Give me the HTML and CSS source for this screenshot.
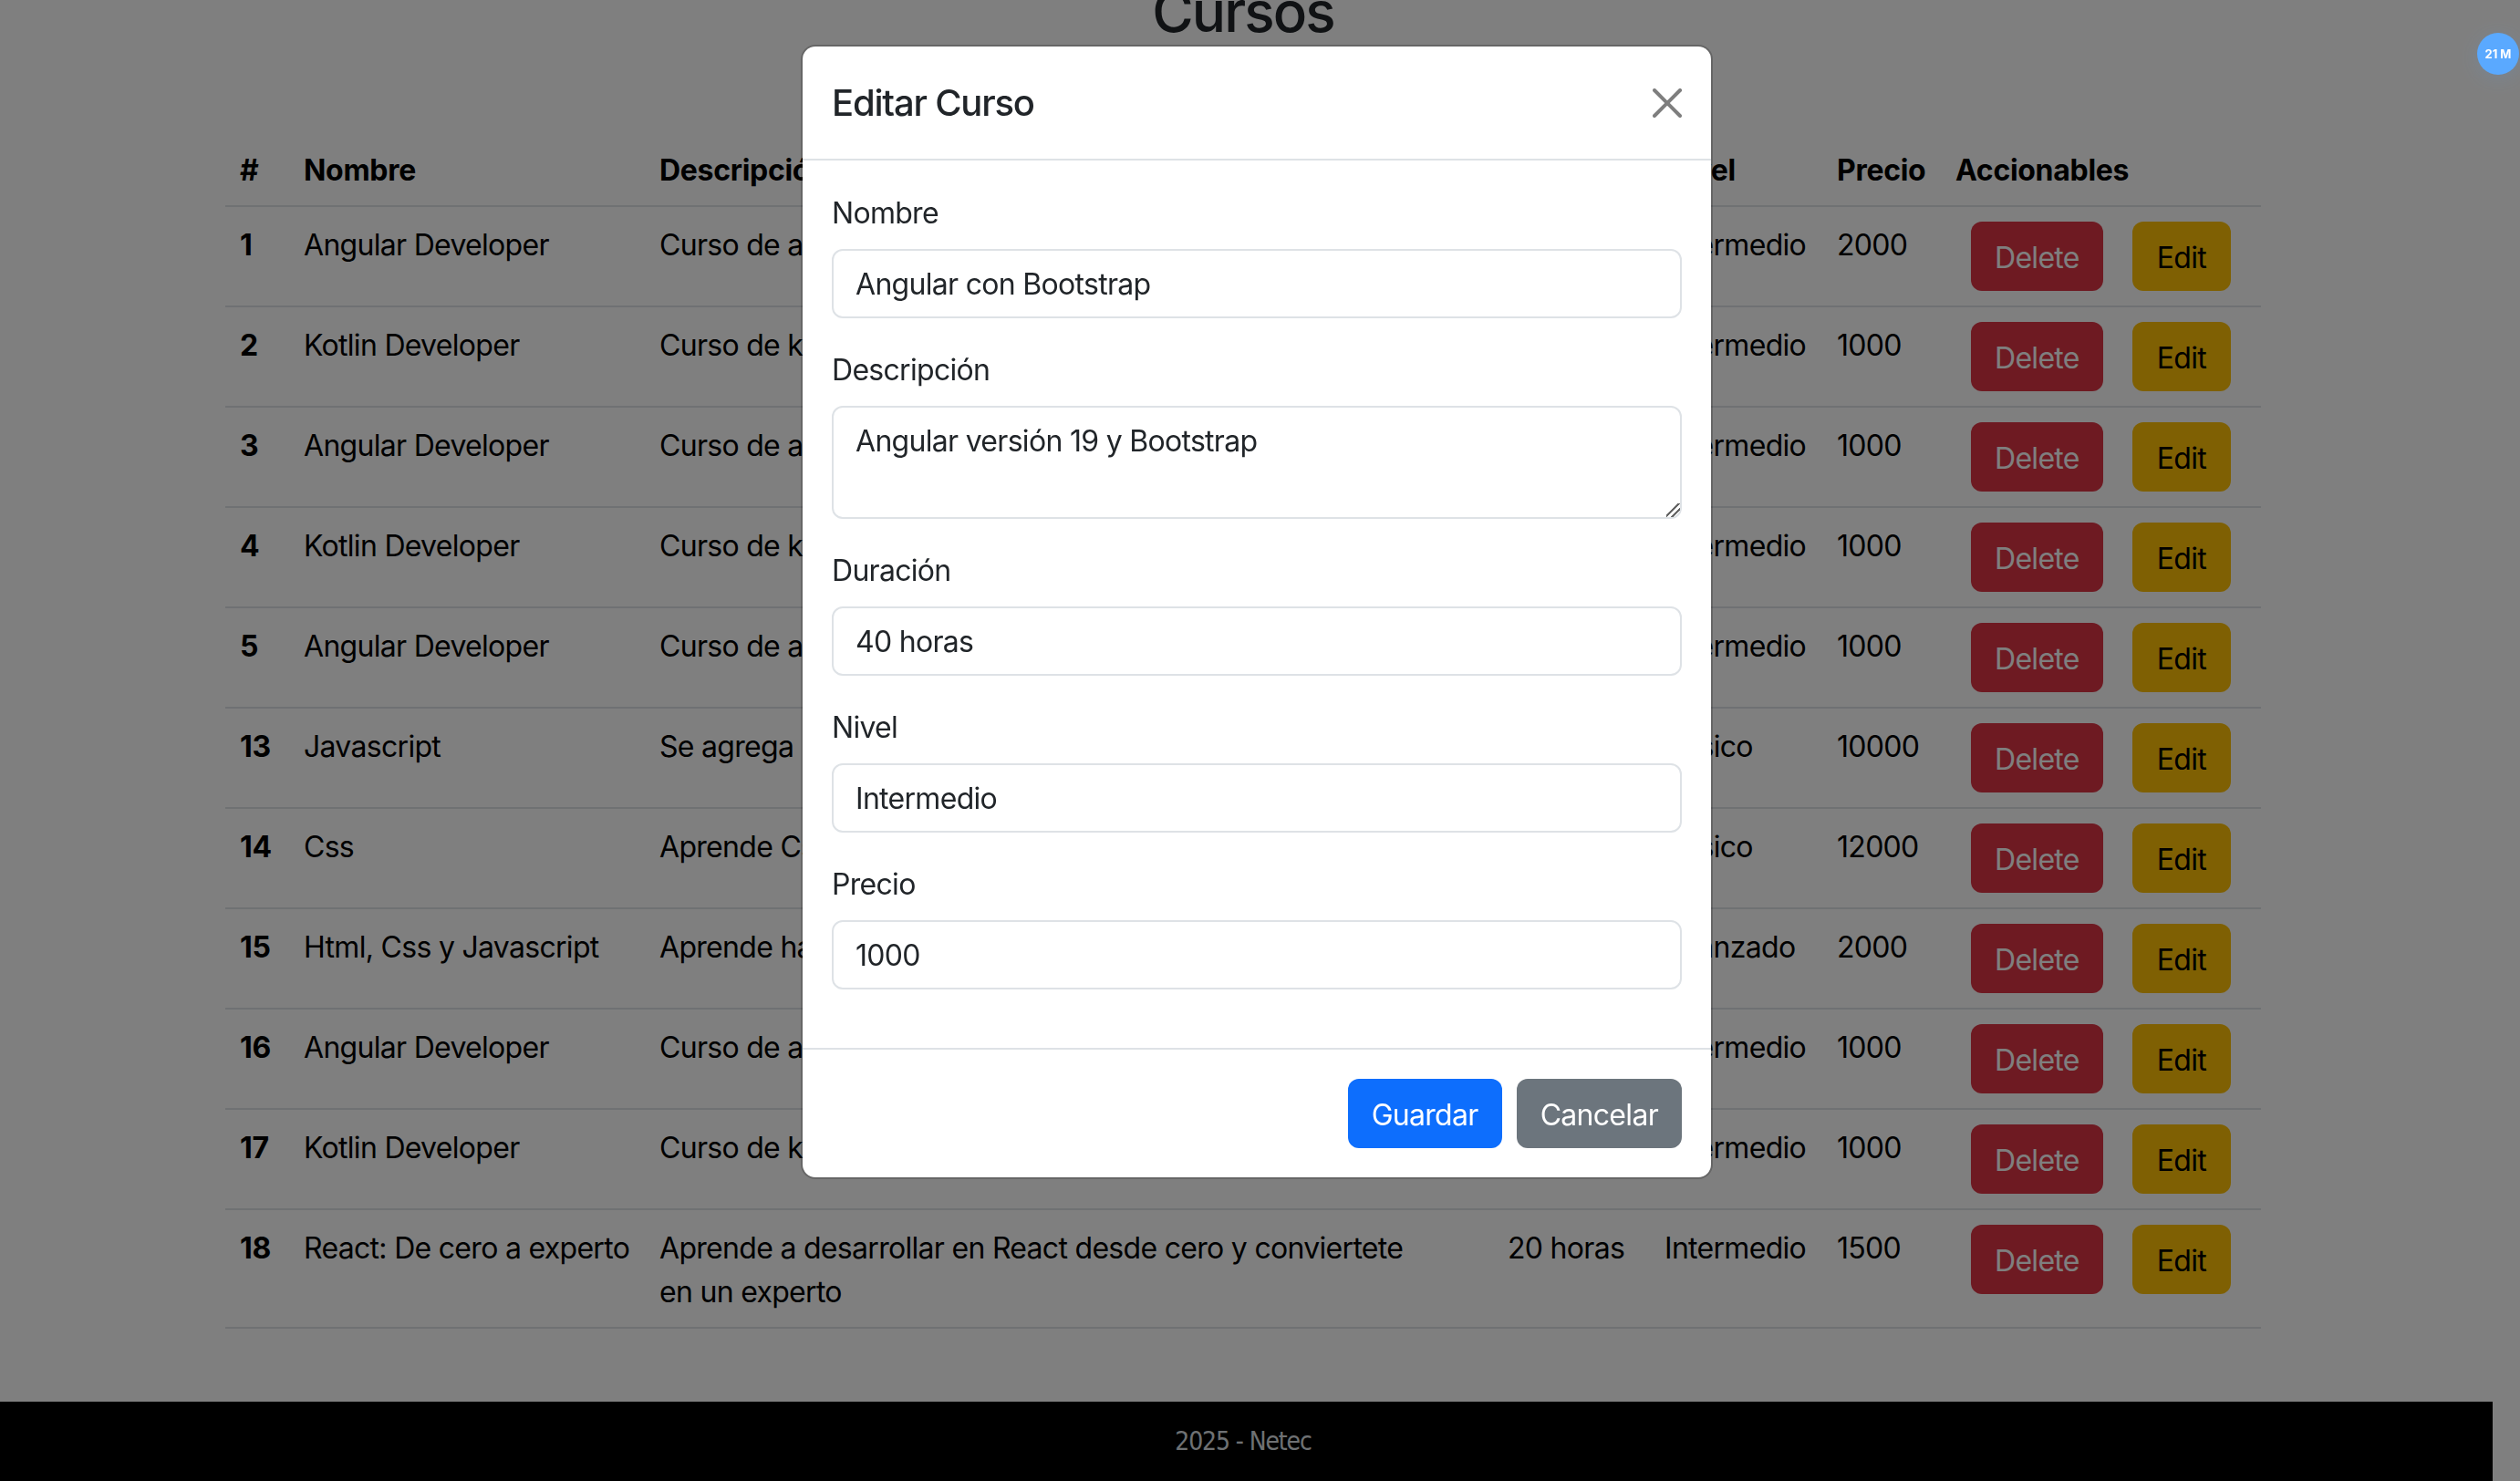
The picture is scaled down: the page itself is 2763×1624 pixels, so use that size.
FILE: index.html
```html
<!DOCTYPE html>
<html lang="es">
    <head>
        <meta charset="utf-8">
        <title>Cursos</title>
        <link rel="stylesheet" href="styles.css">
    </head>
    <body>
        <div class="page">
            <main class="container">
                <h1 class="page-title">Cursos</h1>
                <table class="courses">
                    <colgroup>
                        <col class="col-id">
                        <col class="col-name">
                        <col class="col-desc">
                        <col class="col-time">
                        <col class="col-level">
                        <col class="col-price">
                        <col class="col-actions">
                    </colgroup>
                    <thead>
                        <tr>
                            <th>#</th>
                            <th>Nombre</th>
                            <th>Descripción</th>
                            <th>Duración</th>
                            <th>Nivel</th>
                            <th>Precio</th>
                            <th>Accionables</th>
                        </tr>
                    </thead>
                    <tbody>
                        <tr>
                            <th>1</th>
                            <td>Angular Developer</td>
                            <td>Curso de angular</td>
                            <td>40 horas</td>
                            <td>Intermedio</td>
                            <td>2000</td>
                            <td class="actions"><button class="btn btn-danger">Delete</button><button class="btn btn-warning">Edit</button></td>
                        </tr>
                        <tr>
                            <th>2</th>
                            <td>Kotlin Developer</td>
                            <td>Curso de kotlin</td>
                            <td>40 horas</td>
                            <td>Intermedio</td>
                            <td>1000</td>
                            <td class="actions"><button class="btn btn-danger">Delete</button><button class="btn btn-warning">Edit</button></td>
                        </tr>
                        <tr>
                            <th>3</th>
                            <td>Angular Developer</td>
                            <td>Curso de angular</td>
                            <td>40 horas</td>
                            <td>Intermedio</td>
                            <td>1000</td>
                            <td class="actions"><button class="btn btn-danger">Delete</button><button class="btn btn-warning">Edit</button></td>
                        </tr>
                        <tr>
                            <th>4</th>
                            <td>Kotlin Developer</td>
                            <td>Curso de kotlin</td>
                            <td>40 horas</td>
                            <td>Intermedio</td>
                            <td>1000</td>
                            <td class="actions"><button class="btn btn-danger">Delete</button><button class="btn btn-warning">Edit</button></td>
                        </tr>
                        <tr>
                            <th>5</th>
                            <td>Angular Developer</td>
                            <td>Curso de angular</td>
                            <td>40 horas</td>
                            <td>Intermedio</td>
                            <td>1000</td>
                            <td class="actions"><button class="btn btn-danger">Delete</button><button class="btn btn-warning">Edit</button></td>
                        </tr>
                        <tr>
                            <th>13</th>
                            <td>Javascript</td>
                            <td>Se agrega</td>
                            <td>40 horas</td>
                            <td>Básico</td>
                            <td>10000</td>
                            <td class="actions"><button class="btn btn-danger">Delete</button><button class="btn btn-warning">Edit</button></td>
                        </tr>
                        <tr>
                            <th>14</th>
                            <td>Css</td>
                            <td>Aprende Css</td>
                            <td>40 horas</td>
                            <td>Básico</td>
                            <td>12000</td>
                            <td class="actions"><button class="btn btn-danger">Delete</button><button class="btn btn-warning">Edit</button></td>
                        </tr>
                        <tr>
                            <th>15</th>
                            <td>Html, Css y Javascript</td>
                            <td>Aprende hacer</td>
                            <td>40 horas</td>
                            <td>Avanzado</td>
                            <td>2000</td>
                            <td class="actions"><button class="btn btn-danger">Delete</button><button class="btn btn-warning">Edit</button></td>
                        </tr>
                        <tr>
                            <th>16</th>
                            <td>Angular Developer</td>
                            <td>Curso de angular</td>
                            <td>40 horas</td>
                            <td>Intermedio</td>
                            <td>1000</td>
                            <td class="actions"><button class="btn btn-danger">Delete</button><button class="btn btn-warning">Edit</button></td>
                        </tr>
                        <tr>
                            <th>17</th>
                            <td>Kotlin Developer</td>
                            <td>Curso de kotlin</td>
                            <td>40 horas</td>
                            <td>Intermedio</td>
                            <td>1000</td>
                            <td class="actions"><button class="btn btn-danger">Delete</button><button class="btn btn-warning">Edit</button></td>
                        </tr>
                        <tr>
                            <th>18</th>
                            <td>React: De cero a experto</td>
                            <td>Aprende a desarrollar en React desde cero y conviertete<br>en un experto</td>
                            <td>20 horas</td>
                            <td>Intermedio</td>
                            <td>1500</td>
                            <td class="actions"><button class="btn btn-danger">Delete</button><button class="btn btn-warning">Edit</button></td>
                        </tr>
                    </tbody>
                </table>
            </main>
            <footer class="site-footer">2025 - Netec</footer>
        </div>

        <div class="backdrop">
            <div class="modal">
                <div class="modal-header">
                    <h5 class="modal-title">Editar Curso</h5>
                    <button class="btn-close" aria-label="Cerrar">
                        <svg viewBox="0 0 16 16" width="32" height="32" fill="#000"><path d="M.293.293a1 1 0 0 1 1.414 0L8 6.586 14.293.293a1 1 0 1 1 1.414 1.414L9.414 8l6.293 6.293a1 1 0 0 1-1.414 1.414L8 9.414l-6.293 6.293a1 1 0 0 1-1.414-1.414L6.586 8 .293 1.707a1 1 0 0 1 0-1.414"/></svg>
                    </button>
                </div>
                <form class="modal-body">
                    <div class="field">
                        <label for="nombre">Nombre</label>
                        <input id="nombre" type="text" value="Angular con Bootstrap">
                    </div>
                    <div class="field">
                        <label for="descripcion">Descripción</label>
                        <textarea id="descripcion" rows="2">Angular versión 19 y Bootstrap</textarea>
                    </div>
                    <div class="field">
                        <label for="duracion">Duración</label>
                        <input id="duracion" type="text" value="40 horas">
                    </div>
                    <div class="field">
                        <label for="nivel">Nivel</label>
                        <input id="nivel" type="text" value="Intermedio">
                    </div>
                    <div class="field">
                        <label for="precio">Precio</label>
                        <input id="precio" type="text" value="1000">
                    </div>
                </form>
                <div class="modal-footer">
                    <button class="btn btn-primary">Guardar</button>
                    <button class="btn btn-secondary">Cancelar</button>
                </div>
            </div>
        </div>

        <div class="timer-badge">21 M</div>
    </body>
</html>
```

FILE: styles.css
```css
body {
    margin: 0;
    height: 100vh;
    overflow: hidden;
    background-color: #fff;
    color: #212529;
    font-family: Inter, "Liberation Sans", sans-serif;
    font-size: 32px;
    letter-spacing: -0.7px;
    line-height: 48px;
}

.page {
    width: 2733px;
}

/* the screenshot is scrolled down a bit, so the title is cut off at the top */
.container {
    width: 2232px;
    margin: -26px 0 0 247px;
    padding-bottom: 80px;
}

.page-title {
    margin: 0 0 94px;
    font-size: 62px;
    font-weight: 500;
    letter-spacing: -1.9px;
    line-height: 77px;
    text-align: center;
}

.courses {
    width: 100%;
    border-collapse: collapse;
    color: #000;
    table-layout: fixed;
}

.col-id { width: 70px; }
.col-name { width: 390px; }
.col-desc { width: 930px; }
.col-time { width: 172px; }
.col-level { width: 189px; }
.col-price { width: 130px; }
.col-actions { width: 351px; }

.courses th,
.courses td {
    padding: 18px 16px 14px;
    border-bottom: 2px solid #dee2e6;
    text-align: left;
    vertical-align: top;
}

.courses th {
    letter-spacing: -0.3px;
}

.courses .actions {
    padding: 16px 16px 16px 17px;
    white-space: nowrap;
}

.btn {
    height: 76px;
    padding: 3px 24px 0;
    border: 2px solid transparent;
    border-radius: 12px;
    color: #fff;
    font-family: inherit;
    font-size: 32px;
    letter-spacing: inherit;
    line-height: 48px;
}

.courses .btn {
    margin: 0 16px;
}

.btn-danger { background-color: #dc3545; }
.btn-warning { background-color: #ffc107; color: #000; padding: 3px 25px 0; }
.btn-primary { background-color: #0d6efd; }
.btn-secondary { background-color: #6c757d; }

.site-footer {
    height: 120px;
    padding: 20px 7px 0 0;
    box-sizing: border-box;
    background-color: #000;
    color: #dee2e6;
    font-family: "DejaVu Sans", sans-serif;
    font-size: 28px;
    font-stretch: condensed;
    letter-spacing: -1.1px;
    text-align: center;
}

.backdrop {
    position: fixed;
    top: 0;
    left: 0;
    right: 0;
    bottom: 0;
    display: flex;
    justify-content: center;
    align-items: flex-start;
    padding-right: 7px;
    background-color: rgba(0, 0, 0, 0.5);
}

.modal {
    width: 1000px;
    margin-top: 49px;
    box-sizing: border-box;
    background-color: #fff;
    border: 2px solid rgba(0, 0, 0, 0.2);
    background-clip: padding-box;
    border-radius: 16px;
}

.modal-header {
    display: flex;
    align-items: center;
    justify-content: space-between;
    padding: 32px 32px 31px;
    border-bottom: 2px solid #dee2e6;
}

.modal-title {
    margin: 0;
    font-size: 40px;
    font-weight: 500;
    letter-spacing: -1.2px;
    line-height: 60px;
}

.btn-close {
    display: block;
    width: 32px;
    height: 32px;
    padding: 0;
    border: 0;
    background: none;
    opacity: 0.5;
}

.modal-body {
    display: block;
    padding: 33px 32px 32px;
}

.field {
    margin-bottom: 32px;
}

.field label {
    display: block;
    margin-bottom: 16px;
    padding-top: 1px;
    height: 47px;
}

.field input,
.field textarea {
    display: block;
    width: 100%;
    box-sizing: border-box;
    padding: 13px 24px 11px;
    border: 2px solid #dee2e6;
    border-radius: 12px;
    color: #212529;
    font-family: inherit;
    font-size: 32px;
    letter-spacing: inherit;
    line-height: 48px;
}

.field textarea {
    height: 124px;
}

.field textarea::-webkit-resizer {
    background: linear-gradient(135deg, transparent 43%, #666 43%, #666 52%, transparent 52%, transparent 66%, #666 66%, #666 75%, transparent 75%);
}

.modal-footer {
    display: flex;
    justify-content: flex-end;
    gap: 16px;
    padding: 32px;
    border-top: 2px solid #dee2e6;
}

.timer-badge {
    position: fixed;
    top: 36px;
    left: 2716px;
    width: 46px;
    height: 46px;
    border-radius: 50%;
    background-color: #5aa9ff;
    box-shadow: 0 4px 20px rgba(90, 169, 255, 0.15);
    color: #fff;
    font-size: 13px;
    font-weight: 700;
    letter-spacing: 0;
    line-height: 46px;
    text-align: center;
}
```
